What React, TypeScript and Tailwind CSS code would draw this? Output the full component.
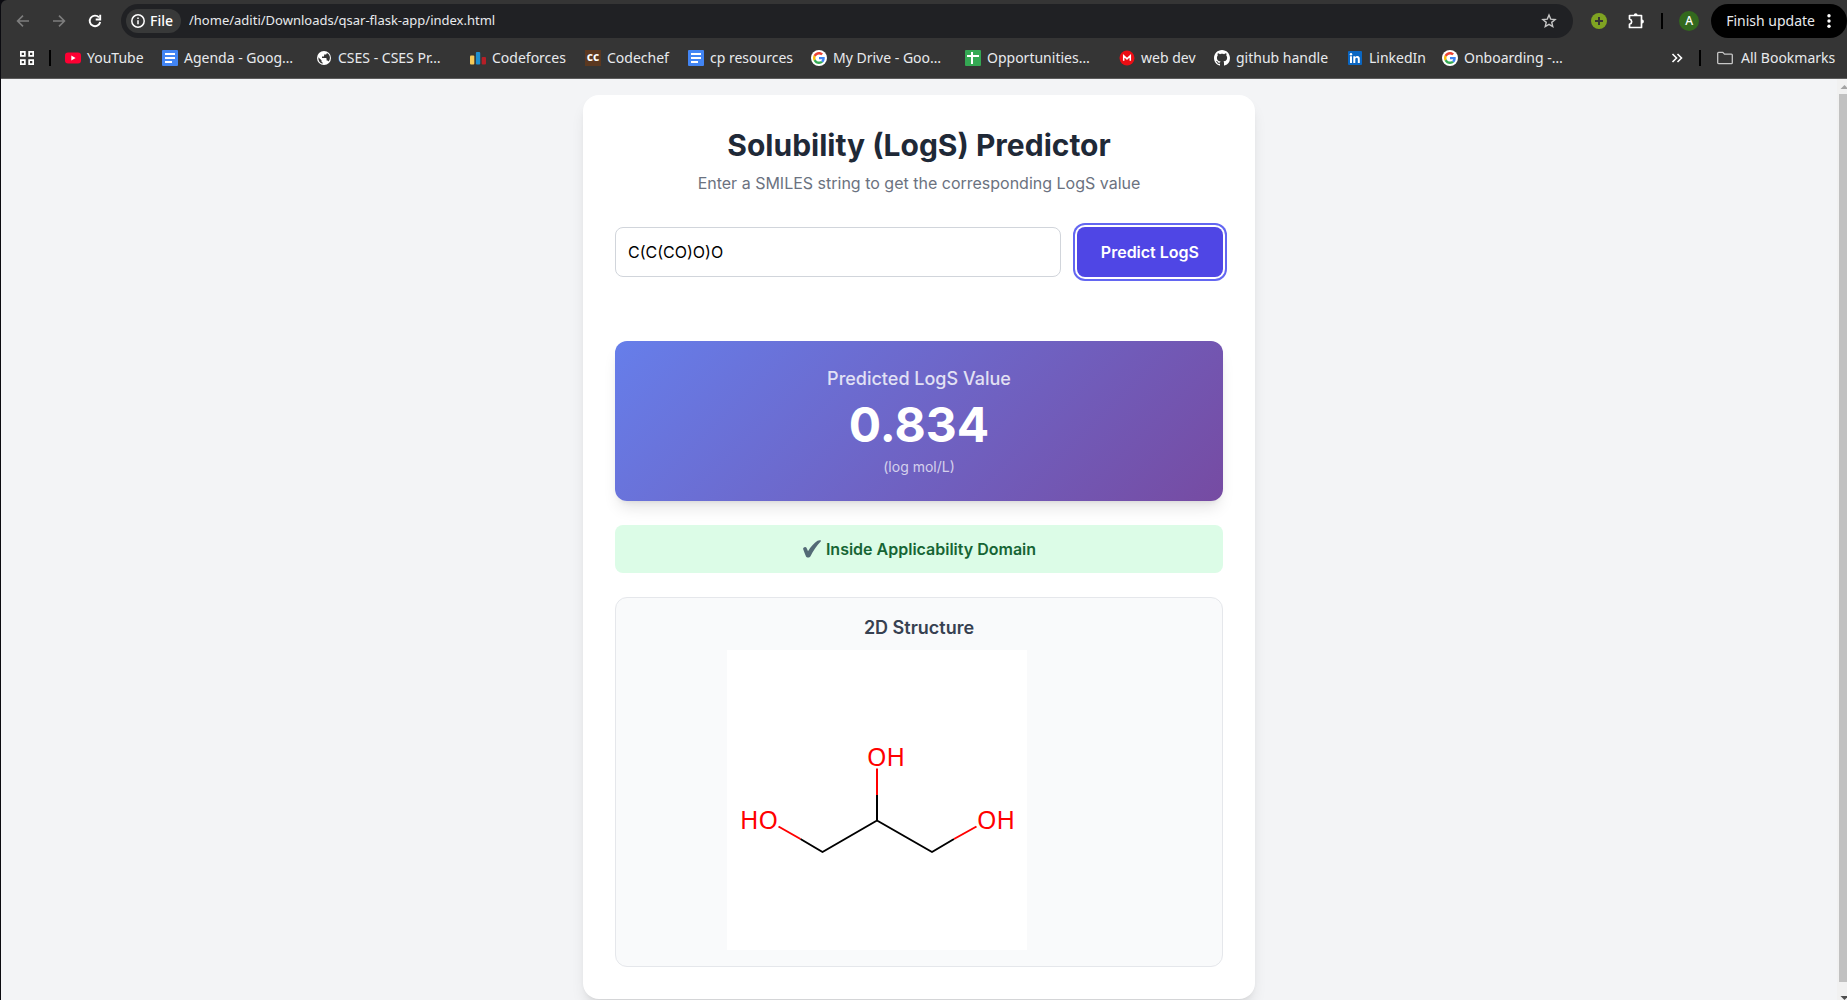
import type { ReactNode } from "react";

const DocsIcon = () => (
  <svg viewBox="0 0 16 16" className="size-4 shrink-0" aria-hidden="true">
    <rect width="16" height="16" rx="1" fill="#4285f4" />
    <path d="M3 3h10v2H3zM3 7h10v2H3zM3 11h7v2H3z" fill="#fff" />
  </svg>
);

const GoogleIcon = () => (
  <svg viewBox="0 0 16 16" className="size-4 shrink-0" aria-hidden="true">
    <circle cx="8" cy="8" r="8" fill="#fff" />
    <g transform="translate(2 2) scale(0.25)">
      <path fill="#EA4335" d="M24 9.5c3.54 0 6.71 1.22 9.21 3.6l6.85-6.85C35.9 2.38 30.47 0 24 0 14.62 0 6.51 5.38 2.56 13.22l7.98 6.19C12.43 13.72 17.74 9.5 24 9.5z" />
      <path fill="#4285F4" d="M46.98 24.55c0-1.57-.15-3.09-.38-4.55H24v9.02h12.94c-.58 2.96-2.26 5.48-4.78 7.18l7.73 6c4.51-4.18 7.09-10.36 7.09-17.65z" />
      <path fill="#FBBC05" d="M10.53 28.59c-.48-1.45-.76-2.99-.76-4.59s.27-3.14.76-4.59l-7.98-6.19C.92 16.46 0 20.12 0 24c0 3.88.92 7.54 2.56 10.78l7.97-6.19z" />
      <path fill="#34A853" d="M24 48c6.48 0 11.93-2.13 15.89-5.81l-7.73-6c-2.15 1.45-4.92 2.3-8.16 2.3-6.26 0-11.57-4.22-13.47-9.91l-7.98 6.19C6.51 42.62 14.62 48 24 48z" />
    </g>
  </svg>
);

const YouTubeIcon = () => (
  <svg viewBox="0 0 16 16" className="size-4 shrink-0" aria-hidden="true">
    <rect y="2.5" width="16" height="11" rx="3" fill="#ff0033" />
    <path d="M6.3 5.6v4.8L10.6 8z" fill="#fff" />
  </svg>
);

const GlobeIcon = () => (
  <svg viewBox="0 0 16 16" className="size-4 shrink-0" aria-hidden="true">
    <circle cx="8" cy="8" r="7" fill="#fff" />
    <path d="M2.3 7.2l3.2 3.1v1c0 .6.5 1.1 1.1 1.1v1.3C4 13.2 2.2 10.8 2.3 7.2zM12.6 11.6c-.2-.6-.7-1-1.4-1h-.6V8.7c0-.4-.3-.7-.7-.7H6V6.600h1.4c.4 0 .7-.3.7-.7V4.6h1.3c.8 0 1.4-.6 1.4-1.300v-.3c4 1.8 3.7 6.2 1.8 8.6z" fill="#353535" />
  </svg>
);

const CodeforcesIcon = () => (
  <svg viewBox="0 0 16 16" className="size-4 shrink-0" aria-hidden="true">
    <rect y="5.5" width="4.3" height="9" rx="1" fill="#f6c958" />
    <rect x="5.9" y="2" width="4.3" height="12.5" rx="1" fill="#1e8fcf" />
    <rect x="11.7" y="7" width="4.3" height="7.5" rx="1" fill="#b61f27" />
  </svg>
);

const CodechefIcon = () => (
  <span className="flex size-4 shrink-0 items-center justify-center bg-[#5b3820] pb-0.5 text-[12px] leading-none font-bold text-white" aria-hidden="true">
    cc
  </span>
);

const SheetsIcon = () => (
  <svg viewBox="0 0 16 16" className="size-4 shrink-0" aria-hidden="true">
    <rect width="16" height="16" rx="1" fill="#34a853" />
    <path d="M6 2h2v3h6v2H8v7H6V7H2V5h4z" fill="#fff" />
  </svg>
);

const MegaIcon = () => (
  <svg viewBox="0 0 16 16" className="size-4 shrink-0" aria-hidden="true">
    <circle cx="8" cy="8" r="7.5" fill="#ec0d14" />
    <path d="M4.700 10.800V5.700L8 8.900l3.300-3.200v5.100" fill="none" stroke="#fff" strokeWidth="1.5" />
  </svg>
);

const GithubIcon = () => (
  <svg viewBox="0 0 16 16" className="size-4 shrink-0" aria-hidden="true">
    <path
      fill="#fff"
      d="M8 0C3.58 0 0 3.58 0 8c0 3.54 2.29 6.53 5.47 7.59.4.07.55-.17.55-.38 0-.19-.01-.82-.01-1.49-2.01.37-2.53-.49-2.69-.94-.09-.23-.48-.94-.82-1.13-.28-.15-.68-.52-.01-.53.63-.01 1.08.58 1.23.82.72 1.21 1.87.87 2.33.66.07-.52.28-.87.51-1.07-1.78-.2-3.64-.89-3.64-3.95 0-.87.31-1.59.82-2.15-.08-.2-.36-1.02.08-2.12 0 0 .67-.21 2.2.82.64-.18 1.32-.27 2-.27s1.36.09 2 .27c1.53-1.04 2.2-.82 2.2-.82.44 1.1.16 1.92.08 2.12.51.56.82 1.27.82 2.15 0 3.07-1.87 3.75-3.65 3.95.29.25.54.73.54 1.48 0 1.07-.01 1.93-.01 2.2 0 .21.15.46.55.38A8.01 8.01 0 0016 8c0-4.42-3.58-8-8-8z"
    />
  </svg>
);

const LinkedInIcon = () => (
  <svg viewBox="0 0 16 16" className="size-4 shrink-0" aria-hidden="true">
    <rect x="1" y="1" width="14" height="14" rx="1" fill="#0a66c2" />
    <path d="M3 6.3h2V13H3zM6.300 6.300h1.900v.9c.4-.7 1.100-1.100 2.100-1.100 2 0 2.500 1.300 2.500 3.100V13h-2V9.600c0-.9 0-1.800-1.100-1.800S8.300 8.600 8.300 9.500V13h-2z" fill="#fff" />
    <circle cx="4" cy="4.2" r="1.2" fill="#fff" />
  </svg>
);

const bookmarks: { label: string; icon: ReactNode; width: string }[] = [
  { label: "YouTube", icon: <YouTubeIcon />, width: "min-w-[59px]" },
  { label: "Agenda - Goog…", icon: <DocsIcon />, width: "min-w-[116px]" },
  { label: "CSES - CSES Pr…", icon: <GlobeIcon />, width: "min-w-[116px]" },
  { label: "Codeforces", icon: <CodeforcesIcon />, width: "min-w-[77px]" },
  { label: "Codechef", icon: <CodechefIcon />, width: "min-w-[65px]" },
  { label: "cp resources", icon: <DocsIcon />, width: "min-w-[85px]" },
  { label: "My Drive - Goo…", icon: <GoogleIcon />, width: "min-w-[116px]" },
  { label: "Opportunities…", icon: <SheetsIcon />, width: "min-w-[116px]" },
  { label: "web dev", icon: <MegaIcon />, width: "min-w-[57px]" },
  { label: "github handle", icon: <GithubIcon />, width: "min-w-[95px]" },
  { label: "LinkedIn", icon: <LinkedInIcon />, width: "min-w-[57px]" },
  { label: "Onboarding -…", icon: <GoogleIcon />, width: "min-w-[116px]" },
];

function Toolbar() {
  return (
    <div className="flex h-[38px] items-end">
      <div className="flex h-[34px] items-center gap-5 pr-[18px] pl-3.5 text-[#e8eaed]">
        <button aria-label="Back" className="text-[#7d7d7d]">
          <svg viewBox="0 0 16 16" className="size-4" fill="none" stroke="currentColor" strokeWidth="1.6">
            <path d="M14 8H3M8 2.6L2.600 8 8 13.4" />
          </svg>
        </button>
        <button aria-label="Forward" className="text-[#7d7d7d]">
          <svg viewBox="0 0 16 16" className="size-4" fill="none" stroke="currentColor" strokeWidth="1.6">
            <path d="M2 8h11M8 2.6L13.4 8 8 13.4" />
          </svg>
        </button>
        <button aria-label="Reload" className="text-white">
          <svg viewBox="0 0 16 16" className="size-4" fill="none" stroke="currentColor" strokeWidth="1.9">
            <path d="M13.2 9A5.3 5.3 0 1 1 12 4.4" />
            <path d="M13.2 1.8v4.700H8.700" />
          </svg>
        </button>
      </div>
      <div className="flex h-[34px] flex-1 items-center rounded-full bg-[#202124] pr-4 pl-[5px]">
        <button className="flex h-6 items-center gap-1 rounded-full bg-[#383939] pr-2 pl-1 text-sm font-medium text-white">
          <svg viewBox="0 0 16 16" className="size-4" fill="none" stroke="currentColor" strokeWidth="1.5" aria-hidden="true">
            <circle cx="8" cy="8" r="6.2" />
            <path d="M8 7.2v4M8 4.5v1.5" />
          </svg>
          File
        </button>
        <input
          aria-label="Address"
          readOnly
          value="/home/aditi/Downloads/qsar-flask-app/index.html"
          className="ml-2 min-w-0 flex-1 bg-transparent text-[13px] text-[#e8eaed] outline-none"
        />
        <button aria-label="Bookmark this tab" className="text-[#c7c7c7]">
          <svg viewBox="0 0 16 16" className="size-4" fill="none" stroke="currentColor" strokeWidth="1.4">
            <path d="M8 2l1.7 4.1 4.4.35-3.35 2.9 1 4.3L8 11.35l-3.75 2.3 1-4.3L1.9 6.45l4.4-.35z" />
          </svg>
        </button>
      </div>
      <div className="flex h-[34px] items-center pl-[18px]">
        <button aria-label="Add extension">
          <svg viewBox="0 0 16 16" className="size-4">
            <circle cx="8" cy="8" r="8" fill="#7fa322" />
            <path d="M8 4v8M4 8h8" stroke="#353535" strokeWidth="2" />
          </svg>
        </button>
        <button aria-label="Extensions" className="ml-5 text-white">
          <svg viewBox="0 0 18 18" className="size-[18px]">
            <path
              d="M2.500 3.500h12v12h-12v-3.200c2.900-1 2.900-4.300 0-5.300z"
              fill="none"
              stroke="currentColor"
              strokeWidth="1.700"
              strokeLinejoin="round"
            />
            <path d="M6.800 3.200a1.900 1.900 0 0 1 3.800 0zM15 7.600a1.900 1.900 0 0 1 0 3.800z" fill="currentColor" />
          </svg>
        </button>
        <span className="ml-4 h-4 w-0.5 bg-black" />
        <button aria-label="Profile" className="ml-4 flex size-5 items-center justify-center rounded-full bg-[#33691e] text-xs font-medium text-white">
          A
        </button>
        <button className="ml-3 flex h-[34px] items-center gap-2 rounded-full bg-black pr-3 pl-[15px] text-sm text-[#e8eaed]">
          Finish update
          <svg viewBox="0 0 12 16" className="h-4 w-3" fill="#fff" aria-hidden="true">
            <circle cx="6" cy="2.8" r="1.7" />
            <circle cx="6" cy="8" r="1.7" />
            <circle cx="6" cy="13.2" r="1.7" />
          </svg>
        </button>
      </div>
    </div>
  );
}

function BookmarksBar() {
  return (
    <nav aria-label="Bookmarks" className="flex h-[41px] items-center border-b border-[#5c5c5c] pr-2.5 pl-[18px] text-sm text-[#e8eaed]">
      <button aria-label="Apps">
        <svg viewBox="0 0 16 16" className="size-4" fill="none" stroke="#fff" strokeWidth="1.7">
          <path d="M1.850 1.850h4v4h-4zM10.150 1.850h4v4h-4zM1.850 10.150h4v4h-4zM10.150 10.150h4v4h-4z" />
        </svg>
      </button>
      <span className="ml-3.5 h-4 w-0.5 bg-black" />
      <div className="ml-3.5 flex flex-1 items-center gap-4">
        {bookmarks.map((b) => (
          <a key={b.label} href="#" className="flex items-center gap-1.5 whitespace-nowrap">
            {b.icon}
            <span className={b.width}>{b.label}</span>
          </a>
        ))}
      </div>
      <button aria-label="More bookmarks">
        <svg viewBox="0 0 12 12" className="size-3" fill="none" stroke="#fff" strokeWidth="1.6">
          <path d="M1.500 2l4 4-4 4M6.500 2l4 4-4 4" />
        </svg>
      </button>
      <span className="ml-4 h-4 w-0.5 bg-black" />
      <button className="ml-4 flex items-center gap-2">
        <svg viewBox="0 0 16 16" className="size-4" fill="none" stroke="#c7c7c7" strokeWidth="1.3" aria-hidden="true">
          <path d="M.7 3.300c0-.6.4-.9.900-.9h4.200l1.700 1.700h6.900c.5 0 .9.300.9.900v7.700c0 .5-.4.900-.9.900H1.600c-.5 0-.9-.4-.9-.9z" />
        </svg>
        <span className="min-w-24 text-left">All Bookmarks</span>
      </button>
    </nav>
  );
}

function Molecule() {
  return (
    <svg viewBox="0 0 300 300" className="size-[300px]" role="img" aria-label="Glycerol structure">
      <rect width="300" height="300" fill="#fff" />
      <g fill="none" strokeWidth="2" strokeLinecap="butt">
        <path d="M73.500 189L95.500 202 150 170.500 205 202 227 189M150 170.500V145" stroke="#000" strokeLinejoin="round" />
        <path d="M51.500 176.500L73.500 189M227 189L249.500 176.500M150 145V118.500" stroke="#f00" />
      </g>
      <g fill="#f00" className="font-['Noto_Sans',sans-serif] text-[25px]">
        <text x="13" y="179">HO</text>
        <text x="140" y="116">OH</text>
        <text x="250" y="179">OH</text>
      </g>
    </svg>
  );
}

function Predictor() {
  return (
    <main className="w-full max-w-2xl self-start rounded-2xl bg-white p-8 shadow-lg">
      <header className="text-center">
        <h1 className="text-3xl font-bold text-[#1f2937]">Solubility (LogS) Predictor</h1>
        <p className="mt-2 text-[#6b7280]">Enter a SMILES string to get the corresponding LogS value</p>
      </header>
      <form className="mt-8 flex gap-4" onSubmit={(e) => e.preventDefault()}>
        <input
          aria-label="SMILES string"
          defaultValue="C(C(CO)O)O"
          className="min-w-0 flex-1 rounded-lg border border-[#d1d5db] p-3 text-black outline-none"
        />
        <button className="rounded-lg bg-[#4f46e5] px-6 py-3 font-semibold text-white ring-2 ring-[#6366f1] ring-offset-2">
          Predict LogS
        </button>
      </form>
      <section className="mt-16 rounded-xl bg-[linear-gradient(135deg,#667eea_0%,#764ba2_100%)] p-6 text-center text-white shadow-lg">
        <h2 className="text-lg font-medium opacity-80">Predicted LogS Value</h2>
        <p className="my-2 text-5xl leading-none font-bold">0.834</p>
        <p className="text-sm opacity-70">(log mol/L)</p>
      </section>
      <p className="mt-6 flex items-center justify-center gap-1 rounded-lg bg-[#dcfce7] p-3 font-semibold text-[#166534]">
        <svg viewBox="0 0 20 20" className="size-5" aria-hidden="true">
          <path d="M1.200 10.200c-.6-2 2.500-3.100 3.300-1.500.6 1.200 1 2.400 1.500 3.500C8.700 8 12 4.200 15.500 1.800c1.100-.7 4.200-.8 3.400.5C14.500 7.200 11.200 11.700 8.500 17.200c-.8 1.600-3.700 1.800-4.500.2-.9-2.200-1.900-4.700-2.800-7.200z" fill="#536a76" />
        </svg>
        Inside Applicability Domain
      </p>
      <section className="mt-6 rounded-xl border border-[#e5e7eb] bg-[#f9fafb] p-4">
        <h2 className="text-center text-lg font-semibold text-[#374151]">2D Structure</h2>
        <div className="mx-auto mt-2 max-w-sm">
          <Molecule />
        </div>
      </section>
    </main>
  );
}

function Scrollbar() {
  return (
    <div aria-hidden="true" className="flex w-2.5 shrink-0 flex-col overflow-hidden bg-[#f1f1f1] pl-0.5">
      <svg viewBox="0 0 8 15" className="h-[15px] w-2">
        <path d="M1.500 10L5.500 6l4 4z" fill="#a3a3a3" />
      </svg>
      <div className="flex-1 bg-[#c1c1c1]" />
      <svg viewBox="0 0 8 18" className="h-[18px] w-2">
        <path d="M1.500 14L5.500 18l4-4z" fill="#505050" />
      </svg>
    </div>
  );
}

export default function App() {
  return (
    <div className="flex h-screen flex-col overflow-hidden border-l border-[#0b0b10] bg-[#0b0b10]">
      <div className="rounded-tl-md bg-[#353535] font-['Noto_Sans',sans-serif]">
        <Toolbar />
        <BookmarksBar />
      </div>
      <div className="flex min-h-0 flex-1 bg-[#f3f4f6] font-['Inter',sans-serif]">
        <div className="flex flex-1 justify-center overflow-hidden p-4">
          <Predictor />
        </div>
        <Scrollbar />
      </div>
    </div>
  );
}
